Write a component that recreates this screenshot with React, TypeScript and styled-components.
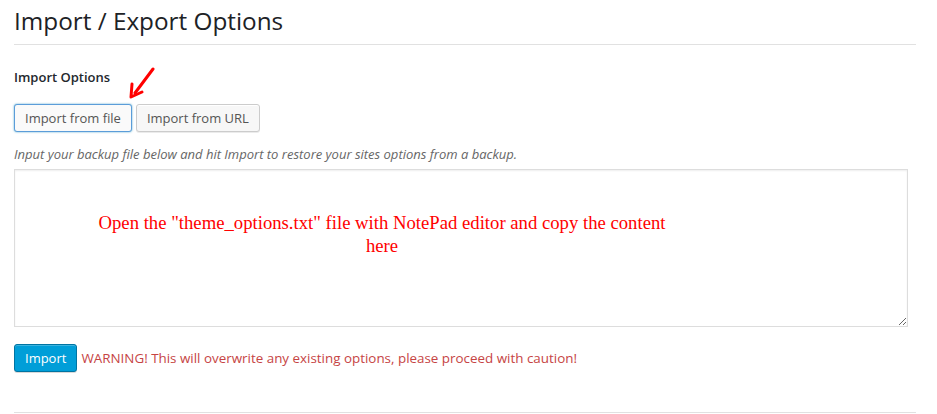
import React from 'react';
import styled, { createGlobalStyle } from 'styled-components';

const GlobalStyle = createGlobalStyle`
  html, body {
    margin: 0;
    padding: 0;
    background: #fff;
  }
  body {
    font-family: "Open Sans", "Liberation Sans", sans-serif;
    font-size: 13px;
    color: #444;
  }
`;

const Page = styled.div`
  position: relative;
  width: 902px;
  padding: 0 0 0 14px;
`;

const Title = styled.h2`
  margin: 0;
  padding: 7px 0 9px;
  font-size: 24.3px;
  font-weight: 400;
  line-height: 28px;
  color: #1d2226;
  border-bottom: 1px solid #e1e1e1;
`;

const Section = styled.div`
  padding-top: 22px;
  padding-bottom: 40px;
  border-bottom: 1px solid #e1e1e1;
`;

const SectionLabel = styled.h4`
  margin: 0;
  font-size: 13px;
  font-weight: 600;
  line-height: 20px;
  color: #23282d;
`;

const Tabs = styled.div`
  display: flex;
  gap: 4px;
  margin-top: 17px;
`;

const TabButton = styled.button<{ $active?: boolean }>`
  height: 28px;
  padding: 0 10px;
  font-family: "Open Sans", "Liberation Sans", sans-serif;
  font-size: 13px;
  color: #555;
  background: ${(p) => (p.$active ? '#fafafa' : '#f7f7f7')};
  border: 1px solid ${(p) => (p.$active ? '#5b9dd9' : '#cccccc')};
  border-radius: 3px;
  box-shadow: ${(p) =>
    p.$active ? '0 0 2px rgba(30,140,190,0.8)' : 'inset 0 1px 0 #fff, 0 1px 0 rgba(0,0,0,0.08)'};
  cursor: pointer;
`;

const Description = styled.p`
  margin: 12px 0 0;
  font-size: 13px;
  font-style: italic;
  line-height: 20px;
  color: #666;
`;

const TextArea = styled.textarea`
  display: block;
  box-sizing: border-box;
  width: 894px;
  height: 158px;
  margin-top: 5px;
  padding: 4px;
  border: 1px solid #ddd;
  box-shadow: inset 0 1px 2px rgba(0, 0, 0, 0.07);
  font-family: "Open Sans", "Liberation Sans", sans-serif;
  font-size: 13px;
  resize: both;
  outline: none;
`;

const ActionRow = styled.div`
  display: flex;
  align-items: center;
  gap: 4px;
  margin-top: 17px;
`;

const PrimaryButton = styled.button`
  height: 28px;
  padding: 0 10px;
  font-family: "Open Sans", "Liberation Sans", sans-serif;
  font-size: 13px;
  color: #fff;
  background: #009ed8;
  border: 1px solid #0074a2;
  border-radius: 3px;
  box-shadow: inset 0 1px 0 rgba(120, 200, 230, 0.5), 0 1px 0 rgba(0, 0, 0, 0.15);
  cursor: pointer;
`;

const Warning = styled.span`
  font-size: 13.4px;
  color: #c64444;
`;

const Annotation = styled.div`
  position: absolute;
  left: 82px;
  top: 211px;
  width: 600px;
  text-align: center;
  font-family: "Liberation Serif", "Times New Roman", serif;
  font-size: 18.7px;
  line-height: 23px;
  color: #ff0000;
  pointer-events: none;
`;

const Arrow = styled.svg`
  position: absolute;
  left: 128px;
  top: 67px;
`;

export default function App() {
  return (
    <>
      <GlobalStyle />
      <Page>
        <Title>Import / Export Options</Title>
        <Section>
          <SectionLabel>Import Options</SectionLabel>
          <Tabs>
            <TabButton $active>Import from file</TabButton>
            <TabButton>Import from URL</TabButton>
          </Tabs>
          <Description>
            Input your backup file below and hit Import to restore your sites options from a backup.
          </Description>
          <TextArea />
          <ActionRow>
            <PrimaryButton>Import</PrimaryButton>
            <Warning>WARNING! This will overwrite any existing options, please proceed with caution!</Warning>
          </ActionRow>
        </Section>
        <Annotation>
          Open the "theme_options.txt" file with NotePad editor and copy the content here
        </Annotation>
        <Arrow width="30" height="34" viewBox="0 0 30 34">
          <line x1="25" y1="2" x2="7" y2="26" stroke="#f00" strokeWidth="3" strokeLinecap="round" />
          <polyline points="4,17 3,30 14,25" fill="none" stroke="#f00" strokeWidth="3" strokeLinejoin="round" strokeLinecap="round" />
        </Arrow>
      </Page>
    </>
  );
}
